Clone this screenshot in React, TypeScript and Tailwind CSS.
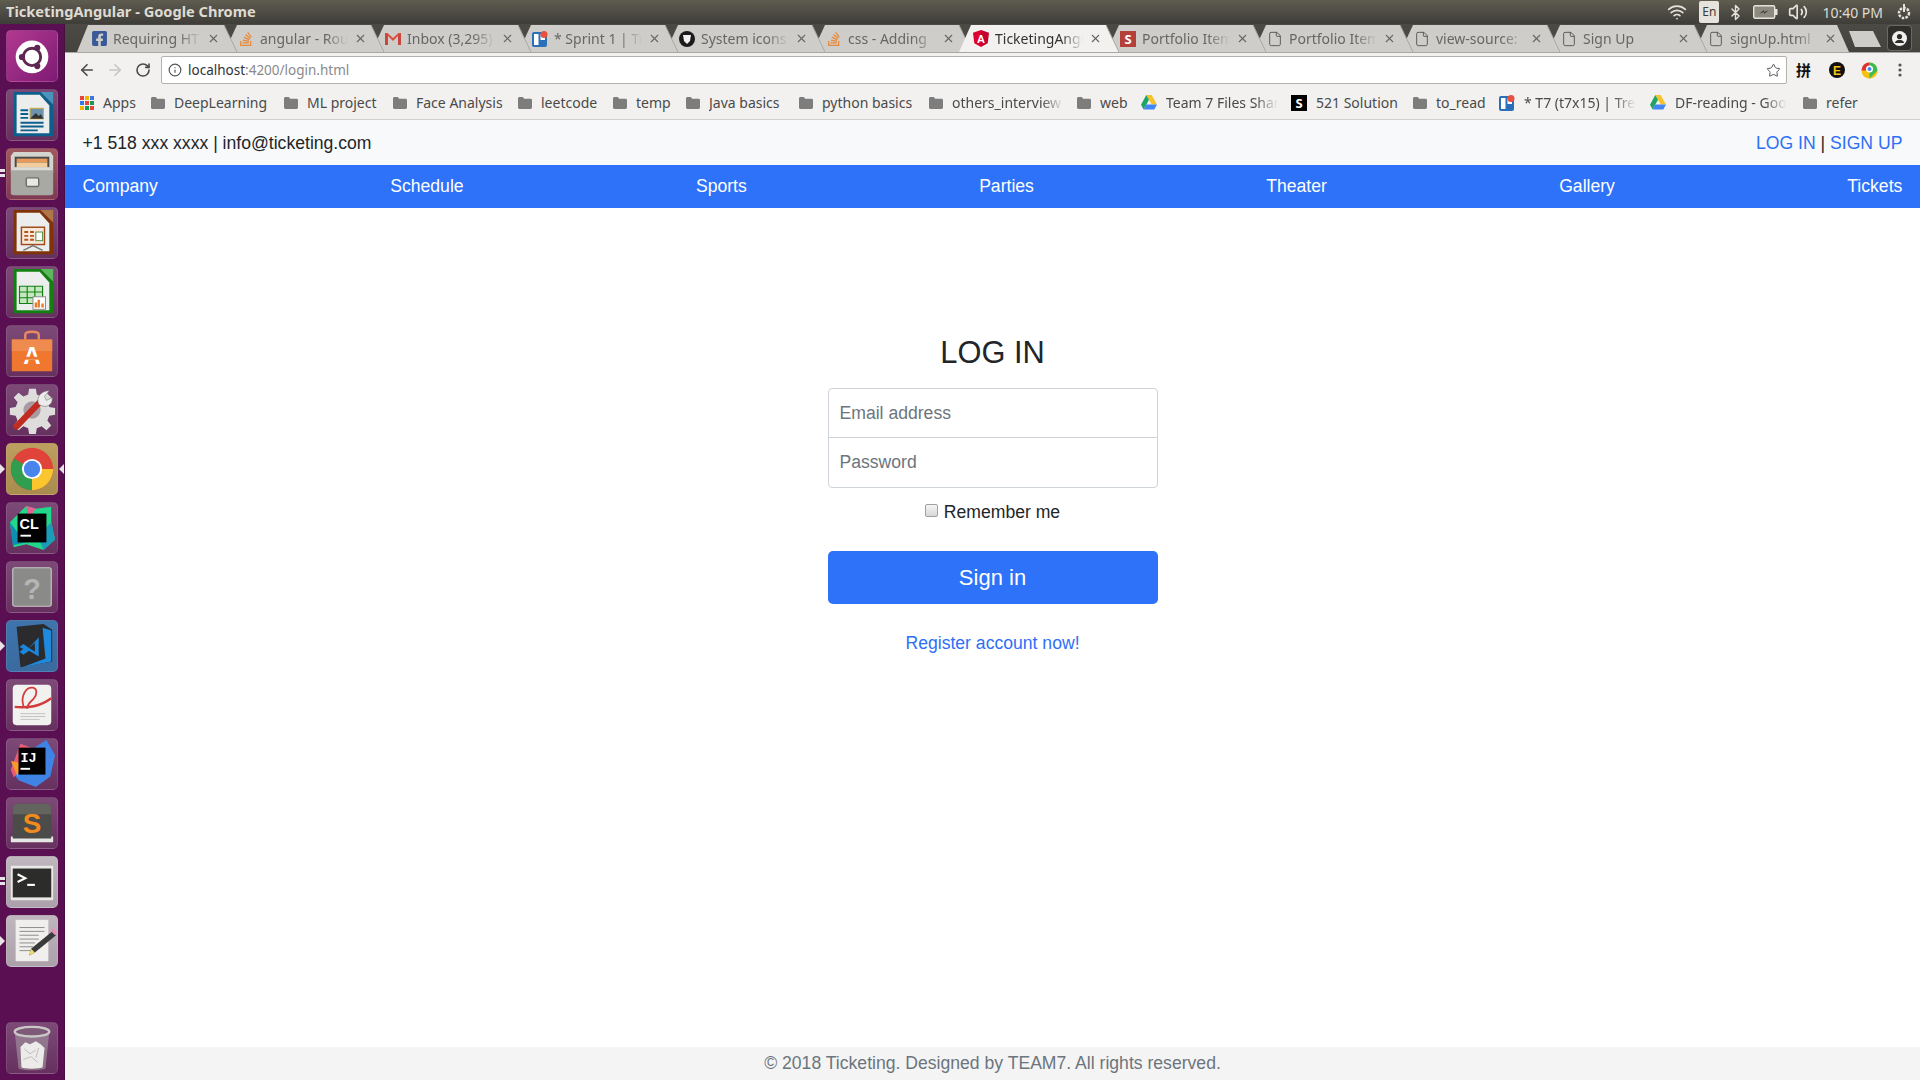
import { ArrowLeft, ArrowRight, Bluetooth, File, Info, RotateCw, Star, Volume2, Wifi, X } from "lucide-react";
import { FaFacebookSquare, FaStackOverflow } from "react-icons/fa";
import type { ReactNode } from "react";

const ui = { fontFamily: '"Noto Sans", sans-serif' };
const page = { fontFamily: '"Liberation Sans", Arial, sans-serif' };

function Folder() {
  return (
    <svg width="14" height="12" viewBox="0 0 14 12" className="shrink-0">
      <path d="M0 1.5C0 .7.6 0 1.4 0h3.4l1.4 1.8h6.4c.8 0 1.4.6 1.4 1.4v7.4c0 .8-.6 1.4-1.4 1.4H1.4C.6 12 0 11.4 0 10.6z" fill="#7d7d7d" />
    </svg>
  );
}

function AppsGrid() {
  const colors = ["#e8453c", "#f4b400", "#3b78e7", "#3b78e7", "#e8453c", "#0f9d58", "#f4b400", "#0f9d58", "#e8453c"];
  return (
    <div className="grid shrink-0 grid-cols-3 gap-[1px]">
      {colors.map((c, i) => (
        <svg key={i} width="4" height="4"><rect width="4" height="4" fill={c} /></svg>
      ))}
    </div>
  );
}

function Drive() {
  return (
    <svg width="16" height="15" viewBox="0 0 16 15" className="shrink-0">
      <path d="M5.3 0h5.3L16 9.6h-5.3z" fill="#f6c32c" />
      <path d="M5.3 0 8 4.7 2.7 14.6 0 9.8z" fill="#1fa463" />
      <path d="M2.7 14.6 5.3 9.6H16l-2.7 5z" fill="#4285f4" />
    </svg>
  );
}

function TrelloIcon() {
  return (
    <svg width="16" height="16" viewBox="0 0 16 16" className="shrink-0">
      <rect y="1" width="15" height="15" rx="2" fill="#2a6fb8" />
      <rect x="2" y="3" width="4.5" height="11" fill="#fff" />
      <rect x="8.5" y="3" width="4.5" height="6" fill="#fff" />
      <circle cx="12" cy="3.5" r="3.5" fill="#e8503f" />
    </svg>
  );
}

function SquareS({ bg }: { bg: string }) {
  return (
    <svg width="16" height="16" viewBox="0 0 16 16" className="shrink-0">
      <rect width="16" height="16" fill={bg} />
      <text x="8" y="13" textAnchor="middle" fontSize="13" fontWeight="700" fill="#fff" fontFamily="Noto Sans">S</text>
    </svg>
  );
}

function Favicon({ name }: { name: string }) {
  if (name === "fb") return <FaFacebookSquare size={17} className="shrink-0 text-[#3b5998]" />;
  if (name === "so") return <FaStackOverflow size={16} className="shrink-0 text-[#e8893a]" />;
  if (name === "gmail")
    return (
      <svg width="16" height="13" viewBox="0 0 16 13" className="shrink-0">
        <path d="M0 1h3v12H0zM13 1h3v12h-3z" fill="#c9463d" />
        <path d="M0 1h2.5L8 6l5.500-5H16L8 9z" fill="#dc4e41" />
      </svg>
    );
  if (name === "trello") return <TrelloIcon />;
  if (name === "gh")
    return (
      <svg width="16" height="16" viewBox="0 0 16 16" className="shrink-0">
        <circle cx="8" cy="8" r="8" fill="#1b1b1b" />
        <path d="M4 4h8l-1 6-3 3-3-3z" fill="#f2f2f2" />
      </svg>
    );
  if (name === "ng")
    return (
      <svg width="16" height="17" viewBox="0 0 16 17" className="shrink-0">
        <path d="M8 0 0 2.800l1.300 10.500L8 17z" fill="#dd0031" />
        <path d="M8 0l8 2.800-1.300 10.500L8 17z" fill="#c3002f" />
        <text x="8" y="12.500" textAnchor="middle" fontSize="11" fontWeight="700" fill="#fff" fontFamily="Liberation Sans">A</text>
      </svg>
    );
  if (name === "s") return <SquareS bg="#b5403a" />;
  return <File size={16} strokeWidth={1.4} className="shrink-0 text-[#555]" />;
}

const tabs = [
  { title: "Requiring HTTP", icon: "fb" },
  { title: "angular - Routing", icon: "so" },
  { title: "Inbox (3,295)", icon: "gmail" },
  { title: "* Sprint 1 | Trello", icon: "trello" },
  { title: "System icons", icon: "gh" },
  { title: "css - Adding", icon: "so" },
  { title: "TicketingAngular", icon: "ng", active: true },
  { title: "Portfolio Item", icon: "s" },
  { title: "Portfolio Item", icon: "file" },
  { title: "view-source:", icon: "file" },
  { title: "Sign Up", icon: "file" },
  { title: "signUp.html", icon: "file", last: true },
];

const bookmarks: { label: string; w: string; icon: ReactNode; fade?: boolean }[] = [
  { label: "Apps", w: "w-[71px]", icon: <AppsGrid /> },
  { label: "DeepLearning", w: "w-[133px]", icon: <Folder /> },
  { label: "ML project", w: "w-[109px]", icon: <Folder /> },
  { label: "Face Analysis", w: "w-[125px]", icon: <Folder /> },
  { label: "leetcode", w: "w-[95px]", icon: <Folder /> },
  { label: "temp", w: "w-[73px]", icon: <Folder /> },
  { label: "Java basics", w: "w-[113px]", icon: <Folder /> },
  { label: "python basics", w: "w-[130px]", icon: <Folder /> },
  { label: "others_interview", w: "w-[148px]", icon: <Folder />, fade: true },
  { label: "web", w: "w-[64px]", icon: <Folder /> },
  { label: "Team 7 Files Shared", w: "w-[150px]", icon: <Drive />, fade: true },
  { label: "521 Solution", w: "w-[122px]", icon: <SquareS bg="#000" /> },
  { label: "to_read", w: "w-[86px]", icon: <Folder /> },
  { label: "* T7 (t7x15) | Trello", w: "w-[151px]", icon: <TrelloIcon />, fade: true },
  { label: "DF-reading - Google", w: "w-[153px]", icon: <Drive />, fade: true },
  { label: "refer", w: "w-[60px]", icon: <Folder /> },
];

const navItems = ["Company", "Schedule", "Sports", "Parties", "Theater", "Gallery", "Tickets"];

function TitleBar() {
  return (
    <div style={ui} className="flex h-6 shrink-0 items-center bg-gradient-to-b from-[#5f5c50] to-[#3e3d38] pl-[6px] pr-[7px] text-[#dfdbd2]">
      <span className="text-[14.6px] font-bold whitespace-nowrap">TicketingAngular - Google Chrome</span>
      <div className="ml-auto flex items-center">
        <Wifi size={20} className="text-[#e6e3dc]" />
        <span className="ml-[12px] flex h-[22px] w-[20px] items-center justify-center rounded-[2px] bg-[#e6e3dc] text-[12px] text-[#3e3d38]">En</span>
        <Bluetooth size={17} className="ml-[8px] text-[#e6e3dc]" />
        <svg width="25" height="14" viewBox="0 0 25 14" className="ml-[9px]">
          <rect x=".7" y=".7" width="21" height="12.600" rx="1.500" fill="#8d8a80" stroke="#e6e3dc" strokeWidth="1.400" />
          <rect x="22" y="4" width="2.500" height="6" fill="#e6e3dc" />
          <path d="M6 9l5-2v2l5-4-5 2V5z" fill="#3e3d38" />
        </svg>
        <Volume2 size={20} className="ml-[10px] text-[#e6e3dc]" />
        <span className="ml-[14px] text-[14px] whitespace-nowrap">10:40 PM</span>
        <svg width="18" height="18" viewBox="0 0 18 18" className="ml-[12px]" fill="none" stroke="#e6e3dc">
          <circle cx="9" cy="10" r="5" strokeWidth="2.500" strokeDasharray="2.500 1.200" />
          <path d="M9 1v8" strokeWidth="2" />
        </svg>
      </div>
    </div>
  );
}

function Tab({ tab }: { tab: (typeof tabs)[number] }) {
  return (
    <div className={`relative flex h-full shrink-0 items-center pl-[14px] ${tab.last ? "w-[143px]" : "w-[147px]"} ${tab.active ? "z-10" : ""}`}>
      {tab.active ? (
        <svg width="160" height="27" viewBox="0 0 160 27" className="absolute top-0 left-0">
          <path d="M0 27 12 0h135l13 27z" fill="#f2f1ef" />
        </svg>
      ) : null}
      <div className="relative flex w-[133px] items-center">
        <div className="flex w-[16px] shrink-0 justify-center">
          <Favicon name={tab.icon} />
        </div>
        <span className={`ml-[6px] h-[20px] w-[88px] overflow-hidden text-[14px] leading-[19px] whitespace-nowrap [mask-image:linear-gradient(to_right,black_75%,transparent)] ${tab.active ? "text-[#333]" : "text-[#666]"}`}>
          {tab.title}
        </span>
        <X size={13} strokeWidth={2} className="ml-[6px] shrink-0 text-[#666]" />
      </div>
      {tab.last ? null : (
        <svg width="13" height="27" viewBox="0 0 13 27" className="absolute top-0 -right-[13px] z-[5]">
          <path d="M0 0h13L6.500 14z" fill="#4a4944" />
          <path d="M0 0l13 27" stroke="#a9a7a4" fill="none" />
        </svg>
      )}
    </div>
  );
}

function TabStrip() {
  return (
    <div style={ui} className="flex h-7 shrink-0 items-end bg-gradient-to-b from-[#4b4a44] to-[#44433e] pl-[12px]">
      <div className="flex h-[27px] shrink-0 bg-[#cfcdca] [clip-path:polygon(11px_0,calc(100%-12px)_0,100%_100%,0_100%)]">
        {tabs.map((t, i) => (
          <Tab key={i} tab={t} />
        ))}
        <div className="w-[12px]" />
      </div>
      <svg width="32" height="16" viewBox="0 0 32 16" className="mb-[5px]">
        <path d="M0 0h24l8 16H6z" fill="#cfcdca" />
      </svg>
      <div className="mb-[2px] ml-[7px] flex h-[24px] w-[23px] items-center justify-center rounded-[3px] bg-[#2f2e2b] ring-1 ring-[#6a6963]">
        <svg width="15" height="15" viewBox="0 0 15 15">
          <circle cx="7.500" cy="7.500" r="7.500" fill="#f1f0ee" />
          <circle cx="7.500" cy="5.500" r="2.600" fill="#2f2e2b" />
          <path d="M2.800 12c.8-2.300 2.700-3.300 4.700-3.300s3.900 1 4.700 3.300z" fill="#2f2e2b" />
        </svg>
      </div>
    </div>
  );
}

function Toolbar() {
  return (
    <div style={ui} className="flex h-[35px] shrink-0 items-center border-t border-[#a9a7a4] bg-[#f2f1ef] pl-[13px]">
      <ArrowLeft size={18} strokeWidth={2.200} className="text-[#4a4a4a]" />
      <ArrowRight size={18} strokeWidth={2.200} className="ml-[10px] text-[#c6c6c6]" />
      <RotateCw size={16} strokeWidth={2.400} className="ml-[11px] text-[#4a4a4a]" />
      <div className="ml-[10px] flex h-[28px] w-[1626px] items-center rounded-[2px] border border-[#b3b1ae] bg-white pr-[5px] pl-[6px]">
        <Info size={14} className="text-[#555]" />
        <span className="ml-[6px] pt-[1px] text-[13.5px]">
          <span className="text-[#333]">localhost</span>
          <span className="text-[#8a8a8a]">:4200/login.html</span>
        </span>
        <Star size={15} strokeWidth={1.600} className="ml-auto text-[#555]" />
      </div>
      <span className="ml-[9px] w-[16px] text-[15px] font-bold text-[#111] [font-family:'Noto_Sans_CJK_SC',sans-serif]">拼</span>
      <svg width="16" height="16" viewBox="0 0 16 16" className="ml-[17px]">
        <circle cx="8" cy="8" r="8" fill="#111" />
        <text x="8" y="12.500" textAnchor="middle" fontSize="12" fontWeight="700" fill="#f5c518" fontFamily="Liberation Sans">E</text>
      </svg>
      <svg width="17" height="17" viewBox="0 0 17 17" className="ml-[16px]">
        <circle cx="8.500" cy="8.500" r="8" fill="#f4c20d" />
        <path d="M8.500.5a8 8 0 0 1 8 8l-8 8z" fill="#3cba54" />
        <path d="M.5 8.500a8 8 0 0 1 8-8v8z" fill="#db3236" />
        <circle cx="8.500" cy="7" r="3.500" fill="#fff" />
        <circle cx="8.500" cy="7" r="2" fill="#4885ed" />
      </svg>
      <svg width="4" height="14" viewBox="0 0 4 14" className="ml-[20px]">
        <circle cx="2" cy="2" r="1.600" fill="#555" />
        <circle cx="2" cy="7" r="1.600" fill="#555" />
        <circle cx="2" cy="12" r="1.600" fill="#555" />
      </svg>
    </div>
  );
}

function BookmarksBar() {
  return (
    <div style={ui} className="flex h-[33px] shrink-0 items-center border-b border-[#d0cfcc] bg-[#f2f1ef] pb-[1px] pl-[15px] text-[14px] text-[#4a4a4a]">
      {bookmarks.map((b) => (
        <div key={b.label} className={`flex shrink-0 items-center gap-[9px] ${b.w}`}>
          {b.icon}
          <span className={`overflow-hidden whitespace-nowrap ${b.fade ? "w-[112px] [mask-image:linear-gradient(to_right,black_80%,transparent)]" : ""}`}>
            {b.label}
          </span>
        </div>
      ))}
    </div>
  );
}

function Tile({ bg, pip, children }: { bg: string; pip?: "one" | "two" | "both"; children: ReactNode }) {
  return (
    <div className={`relative h-[52px] w-[52px] shrink-0 rounded-[5px] border border-white/10 ${bg}`}>
      <svg width="50" height="50" viewBox="0 0 52 52">{children}</svg>
      {pip === "two" ? (
        <div className="absolute top-[20px] -left-[7px] flex flex-col gap-[2px]">
          <div className="h-[3px] w-[5px] bg-[#e8e3e6]" />
          <div className="h-[3px] w-[5px] bg-[#e8e3e6]" />
        </div>
      ) : null}
      {pip === "one" || pip === "both" ? (
        <div className="absolute top-[20px] -left-[7px] h-0 w-0 border-y-[5px] border-l-[5px] border-y-transparent border-l-[#e8e3e6]" />
      ) : null}
      {pip === "both" ? (
        <div className="absolute top-[20px] -right-[7px] h-0 w-0 border-y-[5px] border-r-[5px] border-y-transparent border-r-[#e8e3e6]" />
      ) : null}
    </div>
  );
}

function LoDoc({ edge, corner, children }: { edge: string; corner: string; children: ReactNode }) {
  return (
    <>
      <path d="M7 2h28l13 13v4L48 48H7z" fill={edge} />
      <path d="M35 2h13v13z" fill={corner} />
      <path d="M10 5h24l10 11v29H10z" fill="#eceded" />
      {children}
    </>
  );
}

function Launcher() {
  const purple = "bg-gradient-to-b from-[#7d4a78] to-[#66315f]";
  return (
    <aside className="flex w-[65px] shrink-0 flex-col items-start gap-[7px] border-r border-[#4a0d42] bg-[#5a0f52] pt-[6px] pb-[6px] pl-[6px]">
      <Tile bg="bg-gradient-to-br from-[#b2398f] to-[#7e1a74]">
        <circle cx="26" cy="27" r="17" fill="#fff" />
        <circle cx="26" cy="27" r="9" fill="none" stroke="#5e2750" strokeWidth="3" />
        <circle cx="15.500" cy="27" r="3.200" fill="#5e2750" />
        <circle cx="31.500" cy="17.500" r="3.200" fill="#5e2750" />
        <circle cx="31.500" cy="36.500" r="3.200" fill="#5e2750" />
      </Tile>
      <Tile bg={purple}>
        <LoDoc edge="#0c5f8c" corner="#4a93bb">
          <path d="M14 21h8M14 25h8M14 29h8M14 34h24M14 38h24M14 42h18" stroke="#0c5f8c" strokeWidth="2" />
          <rect x="24" y="19" width="14" height="11" fill="#6e93ad" stroke="#d2ab3c" />
          <path d="M24 30l6-6 3 3 2-2 3 5z" fill="#333" />
        </LoDoc>
      </Tile>
      <Tile bg="bg-gradient-to-b from-[#a0595f] to-[#7f3a55]" pip="two">
        <path d="M7 3h38l3 4v18H4V7z" fill="#d4d4cf" />
        <rect x="8" y="8" width="36" height="16" fill="#4a4a48" />
        <rect x="10" y="10" width="32" height="4" fill="#e89a5a" />
        <rect x="10" y="14" width="32" height="6" fill="#f3cc9b" />
        <path d="M4 22l4-3h36l4 3v25l-3 1H7l-3-1z" fill="#a9a9a4" />
        <path d="M8 19h36l4 3H4z" fill="#dcdcd7" />
        <rect x="20" y="30" width="13" height="9" rx="1.500" fill="#e8e8e3" stroke="#6b6b68" strokeWidth="1.500" />
      </Tile>
      <Tile bg={purple}>
        <LoDoc edge="#7f3306" corner="#b07648">
          <rect x="15" y="20" width="24" height="18" fill="#f9e8da" stroke="#9c4a18" strokeWidth="1.500" />
          <path d="M18 25h4M18 29h4M18 33h4M24 25h4M24 29h4M24 33h4" stroke="#b3541e" strokeWidth="2" />
          <rect x="30" y="25" width="7" height="9" fill="#fff" stroke="#4f8a3a" />
          <path d="M17 44l10-5 10 5" fill="none" stroke="#777" strokeWidth="1.500" />
        </LoDoc>
      </Tile>
      <Tile bg={purple}>
        <LoDoc edge="#118010" corner="#5cb85c">
          <path d="M13 20h24v18H13zM13 26h24M13 32h24M21 20v18M29 20v18" fill="#c6e8c0" stroke="#118010" strokeWidth="1.200" />
          <rect x="27" y="31" width="13" height="13" fill="#fff" stroke="#888" />
          <path d="M30 42v-5M33 42v-8M37 42v-4" strokeWidth="2.500" stroke="#e87a2c" />
        </LoDoc>
      </Tile>
      <Tile bg={purple}>
        <path d="M19 14v-5c0-2 2-3 7-3s7 1 7 3v5" fill="none" stroke="#e98b62" strokeWidth="2.500" />
        <path d="M5 14h42v33H5z" fill="#f0772f" />
        <path d="M5 14h42v12H5z" fill="#ef8b4f" />
        <text x="26" y="40" textAnchor="middle" fontSize="25" fontWeight="700" fill="#fff" fontFamily="Liberation Sans">A</text>
        <rect x="13" y="32" width="26" height="3" fill="#f0772f" />
      </Tile>
      <Tile bg={purple}>
        <path d="M23 4h7l1 6 5 2 5-4 5 5-4 5 2 5 6 1v7l-6 1-2 5 4 5-5 5-5-4-5 2-1 6h-7l-1-6-5-2-5 4-5-5 4-5-2-5-6-1v-7l6-1 2-5-4-5 5-5 5 4 5-2z" fill="#dedddc" />
        <circle cx="26" cy="26" r="9" fill="#a89aa3" />
        <path d="M10 43 35 17" stroke="#c22c20" strokeWidth="6.500" strokeLinecap="round" />
        <path d="M33 20c-3-7 2-14 11-14l-5 6 2 4 6-3c1 8-7 12-14 7z" fill="#ececec" stroke="#777" strokeWidth=".6" />
      </Tile>
      <Tile bg="bg-gradient-to-b from-[#bd9f5f] to-[#a98c4e]" pip="both">
        <circle cx="26" cy="26" r="22" fill="#e0433a" />
        <path d="M26 26 7 37A22 22 0 0 1 7 15z" fill="#2f9e4f" />
        <path d="M26 26 7 37a22 22 0 0 0 19 11z" fill="#2f9e4f" />
        <path d="M26 26h22A22 22 0 0 1 26 48z" fill="#fbc52e" />
        <circle cx="26" cy="26" r="10.500" fill="#fff" />
        <circle cx="26" cy="26" r="8.500" fill="#4a85ee" />
      </Tile>
      <Tile bg={purple}>
        <path d="M3 20 20 3l10 3 16-2v16l4 18-12 11-18-6-13 3z" fill="#21d789" />
        <path d="M20 3l10 3-8 10z" fill="#ec5e96" />
        <path d="M46 20l4 18-12 11-6-14z" fill="#1b9cb8" />
        <path d="M3 20l3 24 13-3z" fill="#0d8fb3" />
        <rect x="11" y="11" width="30" height="30" fill="#000" />
        <text x="13" y="27" fontSize="15" fontWeight="700" fill="#fff" fontFamily="Liberation Sans">CL</text>
        <rect x="14" y="33" width="11" height="2" fill="#fff" />
      </Tile>
      <Tile bg={purple}>
        <rect x="6" y="6" width="40" height="40" rx="2" fill="#8a8a88" stroke="#c6c6c4" strokeWidth="1.200" />
        <text x="26" y="38" textAnchor="middle" fontSize="30" fontWeight="700" fill="#b5b5b3" fontFamily="Liberation Sans">?</text>
      </Tile>
      <Tile bg="bg-gradient-to-b from-[#3f74ad] to-[#3a6a9f]" pip="one">
        <path d="M10 6l28-3 9 6v33l-33 6z" fill="#2b2b2d" />
        <path d="M37 7l9 3v32l-30 6 24-9z" fill="#1f89dd" />
        <path d="M13 27l4-3 6 4 10-11v20l-10-6-6 4-4-3 4-3z" fill="#1b86dc" />
        <path d="M23 28l6-5v9z" fill="#2b2b2d" />
      </Tile>
      <Tile bg={purple}>
        <rect x="6" y="5" width="40" height="42" rx="4" fill="#f1f1ef" />
        <path d="M46 19C34 28 22 29 8 28" fill="none" stroke="#d43a3a" strokeWidth="2.500" />
        <path d="M17 27C14 16 20 7 27 8c5 1 4 8 1 11-3 4-7 5-7 11" fill="none" stroke="#d43a3a" strokeWidth="1.800" />
        <path d="M14 35h26M14 38h26M14 41h20" stroke="#c2c2c0" />
      </Tile>
      <Tile bg={purple}>
        <path d="M14 5 27 10l14-9 9 16-5 22-15 11-18-7L4 32z" fill="#3f83e4" />
        <path d="M14 5l13 5-10 18-10 12-3-8z" fill="#ef5a6f" />
        <path d="M4 23l10 2-3 14z" fill="#f99a2c" />
        <rect x="12" y="9" width="28" height="28" fill="#000" />
        <text x="14" y="24" fontSize="14" fontWeight="700" fill="#fff" fontFamily="Liberation Mono">IJ</text>
        <rect x="14" y="30" width="10" height="2" fill="#fff" />
      </Tile>
      <Tile bg={purple}>
        <path d="M4 40h44v6H4z" fill="#e6e6e4" />
        <path d="M9 6h34l3 3v33H6V9z" fill="#4b4b4a" />
        <path d="M9 6h34l3 3v8H6V9z" fill="#64645f" />
        <text x="26" y="36" textAnchor="middle" fontSize="29" fontWeight="700" fill="#f28a1c" fontFamily="Liberation Sans">S</text>
      </Tile>
      <Tile bg="bg-gradient-to-b from-[#c0b6be] to-[#aca1aa]" pip="two">
        <rect x="4" y="9" width="44" height="36" rx="1" fill="#e8e8e6" />
        <rect x="6" y="12" width="40" height="30" fill="#2c2c2a" />
        <path d="M11 18l8 4-8 4" fill="none" stroke="#fff" strokeWidth="2.200" />
        <path d="M21 29h8" stroke="#fff" strokeWidth="2.200" />
      </Tile>
      <Tile bg="bg-gradient-to-b from-[#c0b6be] to-[#aca1aa]" pip="one">
        <rect x="9" y="4" width="34" height="43" fill="#f0efed" />
        <path d="M13 12h26M13 16h26M13 20h20M13 24h20M13 28h16M13 32h14M13 36h12" stroke="#8a8a88" />
        <path d="M47 16l4 4-22 18-6 3 2-7z" fill="#3a3a3a" />
        <path d="M45 15l3-2 4 4-2 3z" fill="#e98bb6" />
        <path d="M23 41l2-7 4 4z" fill="#ecdc72" />
      </Tile>
      <div className="mt-auto">
        <Tile bg={purple}>
          <path d="M8 9h36l-4 38c-3 3-25 3-28 0z" fill="#a9a3a7" opacity=".55" />
          <path d="M14 25l5-5 5 2 6-3 5 3 4 4-2 20c-5 2-18 2-22 0z" fill="#ecebea" />
          <path d="M18 27l6 5 6-4M17 38l8-3 7 6M33 26l-3 10" stroke="#bdbcba" fill="none" />
          <ellipse cx="26" cy="9" rx="18" ry="5" fill="#7c5a78" stroke="#c9c8c6" strokeWidth="2.500" />
        </Tile>
      </div>
    </aside>
  );
}

function LoginPage() {
  return (
    <div style={page} className="flex min-h-0 flex-1 flex-col bg-white text-[17.6px] text-[#212529]">
      <div className="flex h-[45px] shrink-0 items-center justify-between bg-[#f8f9fa] px-[17.6px] pt-[2px]">
        <span>+1 518 xxx xxxx | info@ticketing.com</span>
        <span>
          <a className="text-[#2e6ff7]">LOG IN</a> | <a className="text-[#2e6ff7]">SIGN UP</a>
        </span>
      </div>
      <nav className="flex h-[43px] shrink-0 items-center justify-between bg-[#2d72f9] px-[17.6px] text-white">
        {navItems.map((n) => (
          <a key={n}>{n}</a>
        ))}
      </nav>
      <main className="flex flex-1 flex-col items-center pt-[126px]">
        <form className="flex w-[330px] flex-col">
          <h1 className="mb-[17px] text-center text-[30.8px] leading-[37px]">LOG IN</h1>
          <div className="overflow-hidden rounded-[4px] border border-[#ced4da]">
            <input placeholder="Email address" className="block h-[49px] w-full border-b border-[#ced4da] px-[11px] outline-none placeholder:text-[#6c757d]" />
            <input placeholder="Password" className="block h-[49px] w-full px-[11px] outline-none placeholder:text-[#6c757d]" />
          </div>
          <label className="mt-[12px] flex h-[24px] items-center justify-center">
            <input type="checkbox" className="mb-[3px] h-[13px] w-[13px] appearance-none rounded-[2px] border border-[#a0a0a0] bg-gradient-to-b from-[#f4f4f4] to-[#d8d8d8]" />
            <span className="ml-[6px]">Remember me</span>
          </label>
          <button type="button" className="mt-[27px] h-[53px] rounded-[5px] bg-[#2d72f9] text-[22px] text-white">
            Sign in
          </button>
          <a className="mt-[26px] text-center leading-[26px] text-[#2e6ff7]">Register account now!</a>
        </form>
      </main>
      <footer className="flex h-[33px] shrink-0 items-center justify-center bg-[#f4f4f4] text-[#6c757d]">
        © 2018 Ticketing. Designed by TEAM7. All rights reserved.
      </footer>
    </div>
  );
}

export default function App() {
  return (
    <div className="flex h-screen flex-col overflow-hidden">
      <TitleBar />
      <div className="flex min-h-0 flex-1">
        <Launcher />
        <div className="flex min-w-0 flex-1 flex-col">
          <TabStrip />
          <Toolbar />
          <BookmarksBar />
          <LoginPage />
        </div>
      </div>
    </div>
  );
}
